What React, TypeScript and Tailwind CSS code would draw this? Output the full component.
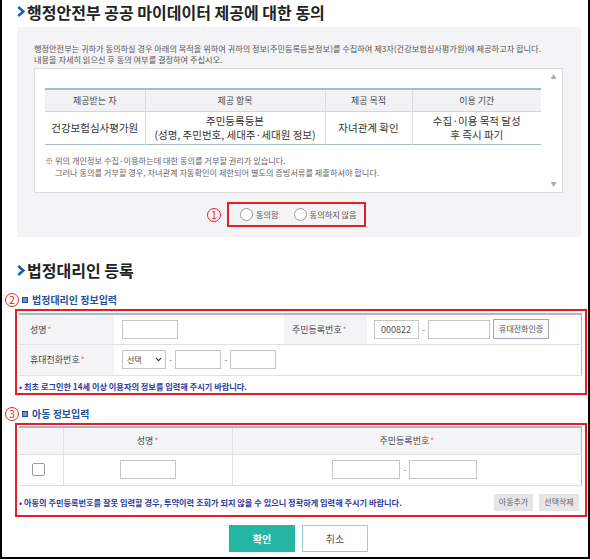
import { ChevronDown } from "lucide-react";

function Arrow() {
  return (
    <svg width="8" height="11" viewBox="0 0 8 11" className="shrink-0">
      <path d="M1.2 1 L6.4 5.5 L1.2 10" fill="none" stroke="#1d5fae" strokeWidth="2.6" />
    </svg>
  );
}

function Circled({ n }: { n: string }) {
  return (
    <span className="w-[14px] h-[14px] rounded-full border border-[#e5222a] text-[#e5222a] text-[10px] leading-none flex items-center justify-center shrink-0">
      {n}
    </span>
  );
}

function Req() {
  return <span className="text-[#e8505a] text-[8px] ml-[1px]">*</span>;
}

function Box({ w, children }: { w: string; children?: React.ReactNode }) {
  return (
    <div className={`${w} h-[19px] border border-[#c6c6c6] bg-white text-[9px] text-[#555] flex items-center pl-[6px]`}>
      {children}
    </div>
  );
}

function Dash() {
  return <span className="text-[9px] text-[#888] px-[3px]">-</span>;
}

function SubHead({ n, label }: { n: string; label: string }) {
  return (
    <div className="flex items-center h-[14px] pl-[3px] gap-[2px]">
      <Circled n={n} />
      <span className="w-[6px] h-[6px] border-[1.5px] border-[#1f4f9c] bg-[#6d95d0] ml-[1px]" />
      <span className="text-[10px] font-bold text-[#24509b] ml-[2px] leading-none">{label}</span>
    </div>
  );
}

export default function App() {
  return (
    <div className="w-[590px] h-[559px] border-x-2 border-b-2 border-black bg-white font-['Noto_Sans_CJK_KR','Noto_Sans',sans-serif] text-[#333] overflow-hidden">
      {/* 1. 동의 */}
      <div className="h-[27px] pl-[15px] pb-[4px] flex items-center gap-[2px]">
        <Arrow />
        <h2 className="text-[16px] font-bold text-[#222] leading-none">행정안전부 공공 마이데이터 제공에 대한 동의</h2>
      </div>

      <div className="ml-[15px] w-[564px] h-[210px] bg-[#f4f4f6] pt-[16px] pl-[17px]">
        <p className="text-[8.2px] leading-[11px] text-[#555] whitespace-nowrap">
          행정안전부는 귀하가 동의하실 경우 아래의 목적을 위하여 귀하의 정보(주민등록등본정보)를 수집하여 제3자(건강보험심사평가원)에 제공하고자 합니다.
          <br />
          내용을 자세히 읽으신 후 동의 여부를 결정하여 주십시오.
        </p>

        <div className="mt-[3px] w-[529px] h-[125px] border border-[#dcdcdc] bg-white flex">
          <div className="flex-1 pl-[10px] pt-[19px]">
            <table className="w-[496px] table-fixed border-collapse border-t-2 border-b border-[#a9b9cd] text-center">
              <colgroup>
                <col className="w-[100px]" />
                <col className="w-[180px]" />
                <col className="w-[87px]" />
                <col />
              </colgroup>
              <thead>
                <tr className="h-[22px] bg-[#f2f2f4] text-[9px] text-[#444] border-b border-[#d4d4d4]">
                  <th className="font-normal border-r border-[#dcdcdc]">제공받는 자</th>
                  <th className="font-normal border-r border-[#dcdcdc]">제공 항목</th>
                  <th className="font-normal border-r border-[#dcdcdc]">제공 목적</th>
                  <th className="font-normal">이용 기간</th>
                </tr>
              </thead>
              <tbody>
                <tr className="h-[33px] text-[10.5px] leading-[14px] text-[#333] border-t border-[#c9c9c9]">
                  <td className="border-r border-[#dcdcdc]">건강보험심사평가원</td>
                  <td className="border-r border-[#dcdcdc]">
                    <div>주민등록등본</div>
                    <div>(성명, 주민번호, 세대주·세대원 정보)</div>
                  </td>
                  <td className="border-r border-[#dcdcdc]">자녀관계 확인</td>
                  <td>
                    <div>수집·이용 목적 달성</div>
                    <div>후 즉시 파기</div>
                  </td>
                </tr>
              </tbody>
            </table>
            <div className="mt-[9px] text-[8.2px] leading-[12px] text-[#666] whitespace-nowrap">
              <div>※ 위의 개인정보 수집·이용하는데 대한 동의를 거부할 권리가 있습니다.</div>
              <div className="pl-[10px]">그러나 동의를 거부할 경우, 자녀관계 자동확인이 제한되어 별도의 증빙서류를 제출하셔야 합니다.</div>
            </div>
          </div>
          <div className="w-[17px] flex flex-col items-center justify-between py-[5px] text-[6px] text-[#a8a8a8] leading-none">
            <span>▲</span>
            <span>▼</span>
          </div>
        </div>

        <div className="mt-[9px] flex items-center">
          <div className="ml-[173px]">
            <Circled n="1" />
          </div>
          <div className="ml-[6px] w-[139px] h-[25px] border-2 border-[#e31e24] flex items-center pl-[11px] text-[8.2px] text-[#555] whitespace-nowrap">
            <span className="w-[13px] h-[13px] rounded-full border border-[#9a9a9a] bg-white shrink-0" />
            <span className="ml-[3px]">동의함</span>
            <span className="ml-[15px] w-[13px] h-[13px] rounded-full border border-[#9a9a9a] bg-white shrink-0" />
            <span className="ml-[3px]">동의하지 않음</span>
          </div>
        </div>
      </div>

      {/* 2. 법정대리인 */}
      <div className="mt-[22px] h-[22px] pl-[15px] flex items-center gap-[2px]">
        <Arrow />
        <h2 className="text-[16px] font-bold text-[#222] leading-none">법정대리인 등록</h2>
      </div>

      <div className="mt-[12px]">
        <SubHead n="2" label="법정대리인 정보입력" />
      </div>

      <div className="mt-[2px] ml-[13px] w-[572px] h-[86px] border-2 border-[#e31e24] px-[2px] pt-[2px]">
        <table className="w-[563px] table-fixed border-collapse border-t-2 border-r border-[#a9b9cd] text-[9px] text-[#444]">
          <colgroup>
            <col className="w-[95px]" />
            <col className="w-[170px]" />
            <col className="w-[83px]" />
            <col />
          </colgroup>
          <tbody>
            <tr className="h-[30px] border-b border-[#e0e0e0]">
              <td className="bg-[#f4f4f6] pl-[11px]">
                성명
                <Req />
              </td>
              <td className="pl-[8px]">
                <Box w="w-[56px]" />
              </td>
              <td className="bg-[#f4f4f6] pl-[8px]">
                주민등록번호
                <Req />
              </td>
              <td className="pl-[7px]">
                <div className="flex items-center">
                  <Box w="w-[45px]">000822</Box>
                  <Dash />
                  <Box w="w-[62px]" />
                  <div className="ml-[3px] w-[56px] h-[20px] border border-[#9ea8b5] bg-[#fafafa] text-[8px] text-[#555] flex items-center justify-center">
                    휴대전화인증
                  </div>
                </div>
              </td>
            </tr>
            <tr className="h-[31px] border-b border-[#e0e0e0]">
              <td className="bg-[#f4f4f6] pl-[11px]">
                휴대전화번호
                <Req />
              </td>
              <td colSpan={3} className="pl-[8px]">
                <div className="flex items-center">
                  <div className="w-[44px] h-[19px] border border-[#c6c6c6] bg-white flex items-center justify-between pl-[4px] pr-[2px] text-[8px] text-[#555]">
                    <span>선택</span>
                    <ChevronDown size={9} strokeWidth={3} color="#333" />
                  </div>
                  <Dash />
                  <Box w="w-[46px]" />
                  <Dash />
                  <Box w="w-[46px]" />
                </div>
              </td>
            </tr>
          </tbody>
        </table>
        <p className="mt-[4px] text-[8.2px] font-bold leading-[12px] text-[#2c3aa0] whitespace-nowrap">• 최초 로그인한 14세 이상 이용자의 정보를 입력해 주시기 바랍니다.</p>
      </div>

      {/* 3. 아동 */}
      <div className="mt-[12px]">
        <SubHead n="3" label="아동 정보입력" />
      </div>

      <div className="mt-[2px] ml-[13px] w-[572px] h-[94px] border-2 border-[#e31e24] px-[2px] pt-[1px]">
        <table className="w-[563px] table-fixed border-collapse border-t-2 border-r border-[#a9b9cd] text-[9px] text-[#444]">
          <colgroup>
            <col className="w-[44px]" />
            <col className="w-[169px]" />
            <col />
          </colgroup>
          <thead>
            <tr className="h-[27px] bg-[#f4f4f6] border-b border-[#e0e0e0]">
              <th className="font-normal border-r border-[#e0e0e0]"></th>
              <th className="font-normal border-r border-[#e0e0e0]">
                성명
                <Req />
              </th>
              <th className="font-normal">
                주민등록번호
                <Req />
              </th>
            </tr>
          </thead>
          <tbody>
            <tr className="h-[31px] border-b border-[#e0e0e0]">
              <td className="border-r border-[#e0e0e0]">
                <div className="ml-[13px] w-[13px] h-[13px] border border-[#9a9a9a] rounded-[2px] bg-white" />
              </td>
              <td className="border-r border-[#e0e0e0]">
                <div className="flex justify-center">
                  <Box w="w-[56px]" />
                </div>
              </td>
              <td>
                <div className="flex items-center justify-center pr-[4px]">
                  <Box w="w-[68px]" />
                  <Dash />
                  <Box w="w-[68px]" />
                </div>
              </td>
            </tr>
          </tbody>
        </table>
        <div className="mt-[8px] flex items-center">
          <p className="flex-1 text-[8.2px] font-bold leading-[12px] text-[#2c3aa0] whitespace-nowrap">
            • 아동의 주민등록번호를 잘못 입력할 경우, 투약이력 조회가 되지 않을 수 있으니 정확하게 입력해 주시기 바랍니다.
          </p>
          <div className="flex gap-[6px] mr-[4px]">
            <div className="w-[39px] h-[17px] bg-[#e6e6e8] text-[8px] text-[#666] flex items-center justify-center">아동추가</div>
            <div className="w-[40px] h-[17px] bg-[#e6e6e8] text-[8px] text-[#666] flex items-center justify-center">선택삭제</div>
          </div>
        </div>
      </div>

      <div className="mt-[8px] pl-[227px] flex gap-[7px]">
        <div className="w-[66px] h-[27px] bg-[#27b5a3] text-white text-[10px] font-bold flex items-center justify-center">확인</div>
        <div className="w-[66px] h-[27px] border border-[#8fd3c9] bg-white text-[#555] text-[10px] flex items-center justify-center">취소</div>
      </div>
    </div>
  );
}
